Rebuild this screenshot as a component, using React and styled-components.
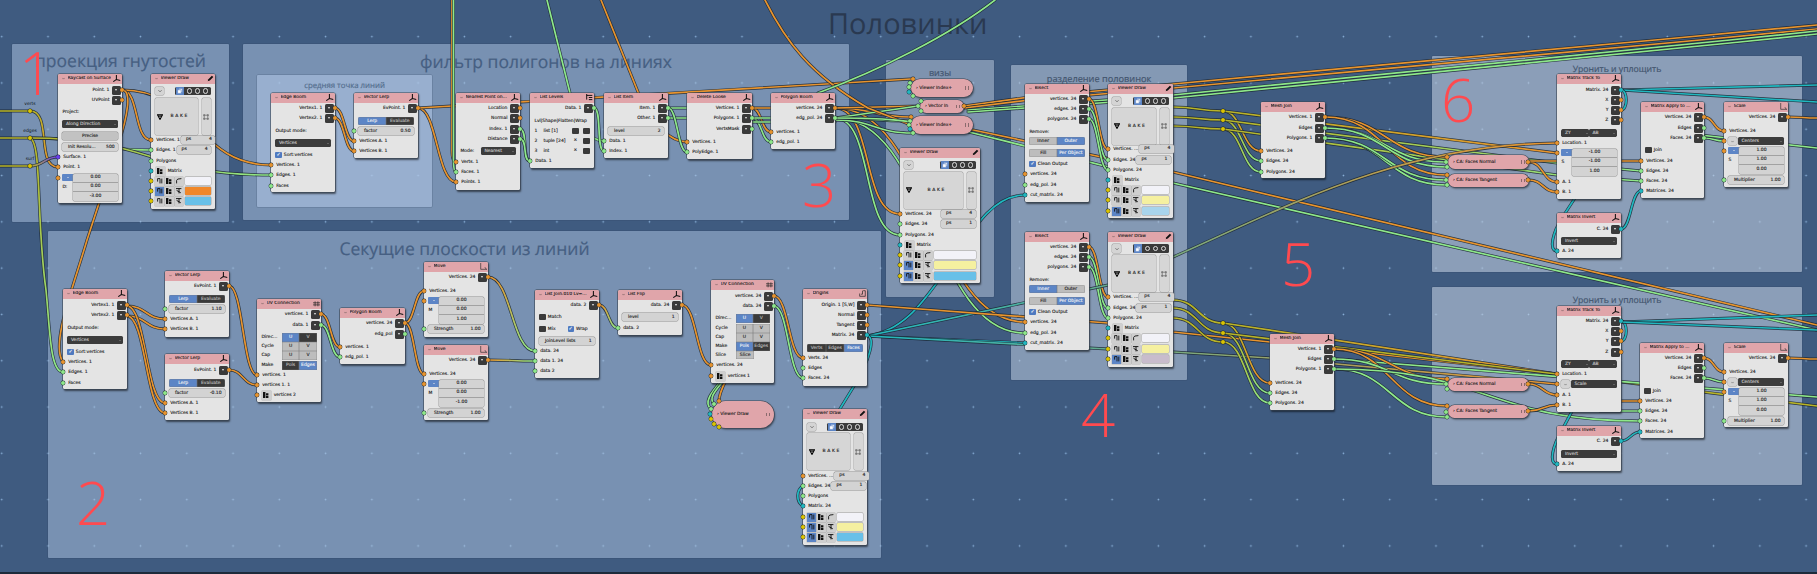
import styled, { createGlobalStyle } from "styled-components";

const O = "#e8942e";
const G = "#8ee88a";
const T = "#20b8c0";
const Y = "#dcc400";
const P = "#6a3ff0";
const OL = "#b8b428";

const GlobalStyle = createGlobalStyle`
  html, body { margin: 0; padding: 0; background: #3f5b80; }
  body { overflow: hidden; }
`;

const Canvas = styled.div`
  position: relative;
  width: 1817px;
  height: 574px;
  overflow: hidden;
  box-sizing: border-box;
  border-bottom: 2px solid #1d2a3a;
  background-color: #3f5b80;
  background-image: radial-gradient(circle, #8db4dc 0.7px, transparent 1.1px);
  background-size: 46.27px 46.3px;
  background-position: -21.4px 13.5px;
  font-family: "DejaVu Sans", sans-serif;
  text-rendering: geometricPrecision;
`;

const PageTitle = styled.div`
  position: absolute;
  left: 828px;
  top: 5px;
  font: 400 29px/1.3 "Open Sans", sans-serif;
  color: #2a3950;
`;

const FrameBox = styled.div`
  position: absolute;
  left: ${(p) => p.$x}px;
  top: ${(p) => p.$y}px;
  width: ${(p) => p.$w}px;
  height: ${(p) => p.$h}px;
  background: ${(p) => p.$bg};
  border-radius: 1px;
  box-shadow: 0 0 0 0.5px rgba(40, 60, 85, 0.35);
  text-align: center;
  color: ${(p) => p.$fg};
  font: 400 ${(p) => p.$fs}px/1.2 "Open Sans", sans-serif;
  padding-top: ${(p) => p.$pt}px;
  box-sizing: border-box;
  -webkit-text-stroke: 0.2px currentColor;
`;

const BigNumber = styled.div`
  position: absolute;
  z-index: 5;
  left: ${(p) => p.$x}px;
  top: ${(p) => p.$y}px;
  font: 300 60px/0.8 "Open Sans", sans-serif;
  color: #ff4a4f;
`;

const WireLayer = styled.svg`
  position: absolute;
  left: 0;
  top: 0;
  z-index: 2;
  fill: none;
  stroke-linecap: round;
`;

const NodeBox = styled.div`
  position: absolute;
  z-index: 3;
  left: ${(p) => p.$x}px;
  top: ${(p) => p.$y}px;
  width: ${(p) => p.$w}px;
  height: ${(p) => p.$h}px;
  background: #e4e4e4;
  border-radius: 1.5px;
  box-shadow: 0 0 0 0.6px #3b4654, 1px 1.5px 2px rgba(0, 0, 0, 0.55);
  font-size: 4.5px;
  color: #1c1c1c;
  -webkit-text-stroke: 0.12px currentColor;
`;

const NodeHeader = styled.div`
  height: 9.5px;
  background: #e0a5aa;
  border-radius: 1.5px 1.5px 0 0;
  display: flex;
  align-items: center;
  padding: 0 1.5px 0 4px;
  gap: 2.5px;
  white-space: nowrap;
  overflow: hidden;
  svg { flex: none; }
`;

const Title = styled.span`
  flex: 1;
  min-width: 0;
  overflow: hidden;
`;

const Row = styled.div`
  position: relative;
  height: ${(p) => p.$h}px;
  display: flex;
  align-items: center;
  padding: 0 4.4px;
  gap: 1px;
  white-space: nowrap;
`;

const OutRow = styled(Row)`
  justify-content: flex-end;
  padding-right: 1.5px;
`;

const InRow = styled(Row)`
  padding-left: 5.2px;
`;

const Socket = styled.i`
  position: absolute;
  z-index: 4;
  width: 4.4px;
  height: 4.4px;
  border-radius: 50%;
  background: ${(p) => p.$c};
  box-shadow: 0 0 0 0.4px #222c36;
  top: 50%;
  margin-top: -2.2px;
  ${(p) => (p.$right ? "right: -2.2px;" : "left: -2.2px;")}
`;

const VecSocket = styled(Socket)`
  top: 4.5px;
`;

const FreeSocket = styled.i`
  position: absolute;
  z-index: 4;
  width: 4.4px;
  height: 4.4px;
  border-radius: 50%;
  background: ${(p) => p.$c};
  box-shadow: 0 0 0 0.4px #222c36;
  left: ${(p) => p.$x - 2.2}px;
  top: ${(p) => p.$y - 2.2}px;
`;

const DropButton = styled.b`
  flex: none;
  width: 8.5px;
  height: 9px;
  margin-left: 1.6px;
  background: #3a3a3a;
  border-radius: 1.5px;
  display: flex;
  align-items: center;
  justify-content: center;
  &::after {
    content: "";
    border-left: 1.6px solid transparent;
    border-right: 1.6px solid transparent;
    border-top: 2px solid #eee;
  }
`;

const Dropdown = styled.div`
  flex: 1;
  min-width: 0;
  height: 8.5px;
  background: #3c3c3c;
  color: #c9c9c9;
  border-radius: 1.5px;
  display: flex;
  align-items: center;
  justify-content: space-between;
  padding: 0 1.5px 0 3.5px;
  overflow: hidden;
  &::after {
    content: "";
    flex: none;
    border-left: 1.2px solid transparent;
    border-right: 1.2px solid transparent;
    border-top: 1.2px solid #888;
  }
`;

const GreyButton = styled.div`
  flex: 1;
  height: 8px;
  background: #c2c2c2;
  border-radius: 1.5px;
  box-shadow: 0 0 0 0.4px #8d8d8d;
  display: flex;
  align-items: center;
  justify-content: center;
`;

const FieldBox = styled(GreyButton)`
  min-width: 0;
  background: #d3d3d3;
  justify-content: space-between;
  padding: 0 3px 0 5.5px;
  overflow: hidden;
`;

const Segments = styled.div`
  flex: 1;
  display: flex;
  height: 8.5px;
  border-radius: 1.5px;
  overflow: hidden;
`;

const Segment = styled.div`
  flex: 1;
  display: flex;
  align-items: center;
  justify-content: center;
  background: ${(p) => (p.$on ? "#5c85c6" : p.$dark ? "#3a3a3a" : "#bdbdbd")};
  color: ${(p) => (p.$on ? "#f2f2f2" : p.$dark ? "#bbb" : "#222")};
  box-shadow: inset 0 0 0 0.3px #777;
`;

const CheckBox = styled.span`
  flex: none;
  width: 6.4px;
  height: 6.4px;
  margin-right: 1px;
  border-radius: 1px;
  background: ${(p) => (p.$on ? "#4f7ac0" : "#3a3a3a")};
  color: #fff;
  font-size: 5px;
  line-height: 6.4px;
  text-align: center;
`;

const VecWrap = styled.div`
  flex: 1;
  display: flex;
  height: 27px;
`;

const VecSide = styled.div`
  flex: none;
  width: 11px;
  display: flex;
  flex-direction: column;
  align-items: flex-start;
  gap: 4px;
`;

const VecToggle = styled.span`
  width: 10.5px;
  height: 7.6px;
  background: #5c85c6;
  border-radius: 1px 0 0 1px;
  display: flex;
  align-items: center;
  justify-content: center;
  &::after {
    content: "";
    border-left: 1.4px solid transparent;
    border-right: 1.4px solid transparent;
    border-bottom: 1.8px solid #eee;
  }
`;

const VecStack = styled.div`
  flex: 1;
  display: flex;
  flex-direction: column;
  background: #d3d3d3;
  border-radius: 1.5px;
  box-shadow: 0 0 0 0.4px #8d8d8d;
`;

const VecCell = styled.div`
  flex: 1;
  display: flex;
  align-items: center;
  justify-content: center;
  & + & { border-top: 0.5px solid #a2a2a2; }
`;

const HeadBox = styled.span`
  flex: none;
  width: 8.5px;
  height: 8.5px;
  border-radius: 1.5px;
  background: #d4d4d4;
  box-shadow: 0 0 0 0.4px #999;
  margin-right: auto;
  display: flex;
  align-items: center;
  justify-content: center;
`;

const ModeGroup = styled.span`
  flex: none;
  height: 8.5px;
  width: 35px;
  background: #3a3a3a;
  border-radius: 1.5px;
  display: flex;
  align-items: center;
  justify-content: space-around;
  padding-right: 1px;
  overflow: hidden;
`;

const ModeActive = styled.span`
  width: 8px;
  height: 8.5px;
  background: #5c85c6;
  display: flex;
  align-items: center;
  justify-content: center;
`;

const ModeRing = styled.span`
  width: 5.2px;
  height: 5.2px;
  border-radius: 50%;
  border: 0.6px solid #ddd;
  box-sizing: border-box;
`;

const BakeBox = styled.div`
  flex: 1;
  height: 37px;
  background: #d6d6d6;
  border-radius: 1.5px;
  box-shadow: 0 0 0 0.4px #999;
  display: flex;
  align-items: center;
  padding: 0 2px;
`;

const BakeLabel = styled.span`
  flex: 1;
  text-align: center;
  letter-spacing: 1.6px;
`;

const BakeSide = styled.div`
  flex: none;
  width: 8.5px;
  height: 37px;
  margin-left: 3px;
  background: #d6d6d6;
  border-radius: 1.5px;
  box-shadow: 0 0 0 0.4px #999;
  display: flex;
  align-items: center;
  justify-content: center;
`;

const PsField = styled(FieldBox)`
  flex: none;
  width: 26px;
  height: 8.4px;
  padding: 0 3.5px 0 5px;
  margin-left: auto;
`;

const Cell = styled.span`
  flex: none;
  width: 8.6px;
  height: 9px;
  background: ${(p) => (p.$on ? "#5c85c6" : "#cfcfcf")};
  box-shadow: 0 0 0 0.3px #999;
  display: flex;
  align-items: center;
  justify-content: center;
`;

const Swatch = styled.span`
  flex: 1;
  height: 8.4px;
  margin-left: 0.6px;
  background: ${(p) => p.$c};
  border-radius: 1px;
  box-shadow: 0 0 0 0.4px #999;
`;

const MatrixIcon = styled(Cell)`
  width: 8.5px;
  margin-right: 2px;
`;

const UvLabel = styled.span`
  flex: none;
  width: 19.5px;
`;

const UvTail = styled.div`
  flex: none;
  width: 18.5px;
  height: 8.6px;
  display: flex;
`;

const UvToggles = styled.div`
  flex: 1;
  height: 9px;
  display: flex;
`;

const LevelNum = styled.span`
  flex: none;
  width: 8px;
`;

const LevelName = styled.span`
  flex: 1;
`;

const LevelMark = styled.span`
  flex: none;
  width: 6.6px;
  height: 6.6px;
  margin-left: 3.4px;
  border-radius: 1px;
  background: ${(p) => (p.$x ? "transparent" : "#3a3a3a")};
  text-align: center;
  line-height: 6.6px;
`;

const PillBox = styled.div`
  position: absolute;
  z-index: 3;
  left: ${(p) => p.$x}px;
  top: ${(p) => p.$y}px;
  width: ${(p) => p.$w}px;
  height: ${(p) => p.$h}px;
  background: #e0a5aa;
  border-radius: ${(p) => p.$h / 2}px;
  box-shadow: 0 0 0 0.6px #3b4654, 1px 1.5px 2px rgba(0, 0, 0, 0.5);
  display: flex;
  align-items: center;
  justify-content: space-between;
  padding: 0 4px 0 5px;
  box-sizing: border-box;
  font-size: 4.5px;
  color: #1c1c1c;
  white-space: nowrap;
  -webkit-text-stroke: 0.12px currentColor;
`;

const PillBars = styled.span`
  flex: none;
  width: 3.6px;
  height: 3.8px;
  border-left: 1.2px solid #8a6a6d;
  border-right: 1.2px solid #8a6a6d;
  box-sizing: border-box;
`;

const RerouteDot = styled.i`
  position: absolute;
  z-index: 4;
  left: ${(p) => p.$x - 2.2}px;
  top: ${(p) => p.$y - 2.2}px;
  width: 4.4px;
  height: 4.4px;
  border-radius: 50%;
  background: ${Y};
  box-shadow: 0 0 0 0.5px #1c2733;
`;

const RerouteLabel = styled.span`
  position: absolute;
  z-index: 4;
  left: ${(p) => p.$x}px;
  top: ${(p) => p.$y - 8}px;
  transform: translateX(-50%);
  font-size: 4.5px;
  line-height: 1;
  color: #0f1620;
`;

function HeaderIcon({ kind }) {
  if (kind === "pencil") {
    return (
      <svg width="7" height="7" viewBox="0 0 10 10">
        <path d="M1 9 L2 6 L7 1 L9 3 L4 8 Z" fill="#111" />
      </svg>
    );
  }
  if (kind === "hash") {
    return (
      <svg width="7" height="7" viewBox="0 0 10 10" stroke="#222" fill="none">
        <path d="M0 4H10M0 7H10M3 2V9M7 2V9" />
      </svg>
    );
  }
  if (kind === "levels") {
    return (
      <svg width="7" height="7" viewBox="0 0 10 10" stroke="#111" fill="none" strokeWidth="1.4">
        <path d="M1 0V8M1 2H9M4 5H9M4 8H9" />
      </svg>
    );
  }
  if (kind === "scale") {
    return (
      <svg width="7" height="7" viewBox="0 0 10 10" stroke="#333" fill="none">
        <path d="M1 0V9H10M7 6L9 9" />
      </svg>
    );
  }
  if (kind === "origin") {
    return (
      <svg width="7" height="7" viewBox="0 0 10 10" stroke="#222" fill="none">
        <path d="M1 5V9H9V1H6M5 1V6H3" />
      </svg>
    );
  }
  return (
    <svg width="7.5" height="7" viewBox="0 0 10 10" stroke="#111" fill="none" strokeWidth="1.5">
      <path d="M4.5 0V6.5L0 9.5M4.5 6.5L10 8" />
    </svg>
  );
}

function Chevron({ size = 3 }) {
  return (
    <svg width={size} height={size} viewBox="0 0 10 10" stroke="#333" fill="none" strokeWidth="1.4">
      <path d="M1 3L5 7L9 3" />
    </svg>
  );
}

function CellGlyph({ n }) {
  if (n === 0) {
    return (
      <svg width="6" height="6" viewBox="0 0 10 10" fill="none" stroke="#111" strokeWidth="1.5">
        <path d="M1 1H5V9M1 1V6M8 1V9" />
      </svg>
    );
  }
  if (n === 1) {
    return (
      <svg width="6" height="6" viewBox="0 0 10 10" fill="#111">
        <path d="M0 0H4V10H0ZM5 2H9V5H5ZM5 6H9V10H5Z" />
      </svg>
    );
  }
  if (n === 2) {
    return (
      <svg width="6" height="6" viewBox="0 0 10 10" fill="none" stroke="#111" strokeWidth="1.5">
        <path d="M1 9V4Q1 1 9 1" />
      </svg>
    );
  }
  return (
    <svg width="6" height="6" viewBox="0 0 10 10" fill="none" stroke="#111" strokeWidth="1.6">
      <path d="M0 1H9M5 1V9M1 4L8 8" />
    </svg>
  );
}

const o = (cy, t, c = O) => ({ k: "o", cy, t, c });
const i = (cy, t, c = O) => ({ k: "i", cy, t, c });
const l = (cy, t) => ({ k: "l", cy, t });
const d = (cy, t) => ({ k: "d", cy, t });
const btn = (cy, t) => ({ k: "b", cy, t });
const f = (cy, t, v, c) => ({ k: "f", cy, t, v, c });
const s = (cy, items, on, all) => ({ k: "s", cy, items, on, all });
const ck = (cy, t, on = true) => ({ k: "c", cy, t, on });
const v = (cy, vals, t, c = O) => ({ k: "v", cy: cy + 9, vals, t, c });
const dd = (cy, a, b) => ({ k: "dd", cy, a, b });
const sd = (cy, t) => ({ k: "sd", cy, t });
const uv = (cy, t, a, b, on, dark) => ({ k: "uv", cy, t, a, b, on, dark });
const lv = (cy, n, t, x) => ({ k: "lv", cy, n, t, x });
const vh = (cy) => ({ k: "vh", cy });
const vb = (cy) => ({ k: "vb", cy });
const vi = (cy, t, c, ps) => ({ k: "vi", cy, t, c, ps });
const mat = (cy, t) => ({ k: "mat", cy, t });
const vc = (cy, on, color, last) => ({ k: "vc", cy, on, color, last });

const WHITE = "#f2f2f8";
const PALE = "#f5f0a0";
const SKY = "#68c0e8";

const rowHeights = { o: 9, i: 9, l: 9, d: 8.5, b: 8.5, f: 8, s: 8.5, c: 9, v: 27, dd: 8.5, sd: 8.5, uv: 9, lv: 9, vh: 9, vb: 37, vi: 9, mat: 9, vc: 9 };

const bisect = (y, on, on2) => [
  o(y + 15, "vertices. 24"),
  o(y + 25, "edges. 24", G),
  o(y + 35, "polygons. 24", G),
  l(y + 48, "Remove:"),
  s(y + 57, ["Inner", "Outer"], on),
  s(y + 69, ["Fill", "Per Object"], on2),
  ck(y + 80, "Clean Output"),
  i(y + 90, "vertices. 24"),
  i(y + 101, "edg_pol. 24", G),
  i(y + 111, "cut_matrix. 24", T),
];

const lerp = (y, val) => [
  o(y + 15, "EvPoint. 1"),
  s(y + 28, ["Lerp", "Evaluate"], 0, true),
  f(y + 38, "factor", val, G),
  i(y + 48, "Vertices A. 1"),
  i(y + 58, "Vertices B. 1"),
];

const edgeBoom = (y) => [
  o(y + 15, "Vertex1. 1"),
  o(y + 25, "Vertex2. 1"),
  l(y + 38, "Output mode:"),
  d(y + 50, "Vertices"),
  ck(y + 62, "Sort:vertices"),
  i(y + 72, "Vertices. 1"),
  i(y + 82, "Edges. 1", G),
  i(y + 93, "Faces", G),
];

const nodes = [
  { t: "Raycast on Surface", x: 58, y: 74, w: 64, b: 203, rows: [o(90, "Point. 1"), o(100, "UVPoint"), l(112, "Project:"), d(124, "Along Direction"), btn(136, "Precise"), f(147, "Init Resolu...", "500"), i(157, "Surface. 1", P), i(167, "Point. 1"), v(178, ["0.00", "0.00", "-3.00"], "D:")] },
  { t: "Viewer Draw", x: 151, y: 74, w: 64, b: 209, ic: "pencil", rows: [vh(91), vb(116.5), vi(140, "Vertices. 1", O, "4"), vi(150, "Edges. 1", G, "4"), i(161, "Polygons", G), mat(171, "Matrix"), vc(181, -1, WHITE), vc(191, 0, "#f0872a", 1), vc(201, -1, SKY, 1)] },
  { t: "Edge Boom", x: 271, y: 93, w: 64, b: 192, rows: edgeBoom(93) },
  { t: "Vector Lerp", x: 354, y: 93, w: 64, b: 158, rows: lerp(93, "0.50") },
  { t: "Nearest Point on...", x: 456, y: 93, w: 64, b: 190, rows: [o(108, "Location"), o(118, "Normal"), o(129, "Index. 1", G), o(139, "Distance", G), { k: "mode", cy: 151 }, i(162, "Verts. 1"), i(172, "Faces. 1", G), i(182, "Points. 1")] },
  { t: "List Levels", x: 530, y: 93, w: 64, b: 168, ic: "levels", rows: [o(108, "Data. 1", G), l(121, "Lvl|Shape|Flatten|Wrap"), lv(131, "1", "list [1]", false), lv(141, "2", "tuple [24]", true), lv(151, "3", "int", true), i(161, "Data. 1", G)] },
  { t: "List Item", x: 604, y: 93, w: 64, b: 158, rows: [o(108, "Item. 1", G), o(118, "Other. 1", G), f(131, "level", "2"), i(141, "Data. 1", G), i(151, "Index. 1", G)] },
  { t: "Delete Loose", x: 687, y: 93, w: 65, b: 159, rows: [o(108, "Vertices. 1"), o(118, "Polygons. 1", G), o(129, "VertsMask", G), i(142, "Vertices. 1"), i(152, "PolyEdge. 1", G)] },
  { t: "Polygon Boom", x: 771, y: 93, w: 64, b: 149, rows: [o(108, "vertices. 24"), o(118, "edg_pol. 24", G), i(132, "vertices. 1"), i(142, "edg_pol. 1", G)] },
  { t: "Viewer Draw", x: 900, y: 148, w: 80, b: 283, ic: "pencil", rows: [vh(165), vb(190), vi(214, "Vertices. 24", O, "4"), vi(224, "Edges. 24", G, "1"), i(235, "Polygons. 24", G), mat(245, "Matrix"), vc(255, -1, WHITE), vc(265, 0, PALE, 1), vc(276, 0, SKY, 1)] },
  { t: "Bisect", x: 1025, y: 84, w: 64, b: 202, rows: bisect(84, 1, 1) },
  { t: "Viewer Draw", x: 1108, y: 84, w: 65, b: 218, ic: "pencil", rows: [vh(101), vb(126), vi(149, "Vertices. ...", O, "4"), vi(160, "Edges. 24", G, "1"), i(170, "Polygons. 24", G), mat(180, "Matrix"), vc(190, -1, WHITE), vc(200, -1, PALE, 1), vc(211, 0, "#a8d4ec", 1)] },
  { t: "Bisect", x: 1025, y: 232, w: 64, b: 350, rows: bisect(232, 0, 1) },
  { t: "Viewer Draw", x: 1108, y: 232, w: 65, b: 367, ic: "pencil", rows: [vh(248.5), vb(273.5), vi(297, "Vertices. ...", O, "4"), vi(308, "Edges. 24", G, "1"), i(318, "Polygons. 24", G), mat(328, "Matrix"), vc(338, -1, WHITE), vc(349, -1, PALE, 1), vc(359, 0, "#c8bccc", 1)] },
  { t: "Mesh Join", x: 1261, y: 102, w: 64, b: 178, rows: [o(117, "Vertices. 1"), o(128, "Edges", G), o(138, "Polygons. 1", G), i(151, "Vertices. 24"), i(161, "Edges. 24", G), i(172, "Polygons. 24", G)] },
  { t: "Mesh Join", x: 1270, y: 334, w: 64, b: 410, rows: [o(349, "Vertices. 1"), o(359, "Edges", G), o(369, "Polygons. 1", G), i(383, "Vertices. 24"), i(393, "Edges. 24", G), i(403, "Polygons. 24", G)] },
  { t: "Matrix Track To", x: 1557, y: 74, w: 64, b: 199, rows: [o(90, "Matrix. 24", T), o(100, "X"), o(110, "Y"), o(120, "Z"), dd(133, "ZY", "AB"), i(143, "Location. 1"), v(153, ["-1.00", "-1.00", "1.00"], "S"), i(182, "A. 1"), i(192, "B. 1")] },
  { t: "Matrix Invert", x: 1557, y: 213, w: 64, b: 258, rows: [o(229, "C. 24", T), d(241, "Invert"), i(251, "A. 24", T)] },
  { t: "Matrix Apply to ...", x: 1641, y: 102, w: 63, b: 198, rows: [o(117, "Vertices. 24"), o(128, "Edges", G), o(138, "Faces. 24", G), ck(150, "Join", false), i(161, "Vertices. 24"), i(171, "Edges. 24", G), i(181, "Faces. 24", G), i(191, "Matrices. 24", T)] },
  { t: "Scale", x: 1724, y: 102, w: 64, b: 187, ic: "scale", rows: [o(117, "Vertices. 24"), i(131, "Vertices. 24"), sd(141, "Centers"), v(151, ["1.00", "1.00", "0.00"], "S"), f(180, "Multiplier", "1.00", G)] },
  { t: "Matrix Track To", x: 1557, y: 306, w: 64, b: 412, rows: [o(321, "Matrix. 24", T), o(331, "X"), o(341, "Y"), o(352, "Z"), dd(364, "ZY", "AB"), i(374, "Location. 1"), sd(384, "Scale"), i(395, "A. 1"), i(405, "B. 1")] },
  { t: "Matrix Invert", x: 1557, y: 426, w: 64, b: 471, rows: [o(441, "C. 24", T), d(454, "Invert"), i(464, "A. 24", T)] },
  { t: "Matrix Apply to ...", x: 1640, y: 343, w: 64, b: 438, rows: [o(358, "Vertices. 24"), o(368, "Edges", G), o(378, "Faces. 24", G), ck(391, "Join", false), i(401, "Vertices. 24"), i(411, "Edges. 24", G), i(421, "Faces. 24", G), i(432, "Matrices. 24", T)] },
  { t: "Scale", x: 1724, y: 343, w: 64, b: 427, ic: "scale", rows: [o(358, "Vertices. 24"), i(372, "Vertices. 24"), sd(382, "Centers"), v(392, ["1.00", "1.00", "0.00"], "S"), f(421, "Multiplier", "1.00", G)] },
  { t: "Edge Boom", x: 63, y: 289, w: 64, b: 389, rows: edgeBoom(290) },
  { t: "Vector Lerp", x: 165, y: 271, w: 64, b: 337, rows: lerp(271, "1.10") },
  { t: "Vector Lerp", x: 165, y: 354, w: 64, b: 420, rows: lerp(355, "-0.10") },
  { t: "UV Connection", x: 257, y: 299, w: 64, b: 402, ic: "hash", rows: [o(314, "vertices. 1"), o(325, "data. 1", G), uv(337, "Direc...", "U", "V", [0], [1]), uv(346, "Cycle", "U", "V", [], []), uv(355, "Cap", "U", "V", [], []), uv(365, "Make", "Pols", "Edges", [1], [0]), i(375, "vertices. 1"), i(385, "vertices 1. 1"), { k: "ico", cy: 395, t: "vertices 2" }] },
  { t: "Polygon Boom", x: 340, y: 308, w: 65, b: 364, rows: [o(323, "vertices. 24"), o(334, "edg_pol", G), i(347, "vertices. 1"), i(357, "edg_pol. 1", G)] },
  { t: "Move", x: 424, y: 262, w: 64, b: 337, ic: "scale", rows: [o(277, "Vertices. 24"), i(291, "Vertices. 24"), v(301, ["0.00", "0.00", "1.00"], "M"), f(329, "Strength", "1.00", G)] },
  { t: "Move", x: 424, y: 345, w: 64, b: 420, ic: "scale", rows: [o(360, "Vertices. 24"), i(374, "Vertices. 24"), v(384, ["0.00", "0.00", "-1.00"], "M"), f(413, "Strength", "1.00", G)] },
  { t: "List Join.010 Lv=...", x: 535, y: 290, w: 64, b: 378, rows: [o(305, "data. 2"), ck(317, "Match", false), { k: "mw", cy: 329 }, f(341, "JoinLevel lists", "1"), i(351, "data. 24", G), i(361, "data 1. 24", G), i(371, "data 2", G)] },
  { t: "List Flip", x: 618, y: 290, w: 64, b: 335, rows: [o(305, "data. 24"), f(317, "level", "1"), i(328, "data. 2", G)] },
  { t: "UV Connection", x: 711, y: 280, w: 63, b: 383, ic: "hash", rows: [o(296, "vertices. 24"), o(306, "data. 24", G), uv(318, "Direc...", "U", "V", [0], [1]), uv(328, "Cycle", "U", "V", [], []), uv(337, "Cap", "U", "V", [], []), uv(346, "Make", "Pols", "Edges", [0], [1]), { k: "slice", cy: 355 }, i(365, "vertices. 24"), { k: "ico", cy: 376, t: "vertices 1" }] },
  { t: "Origins", x: 803, y: 289, w: 64, b: 386, ic: "origin", rows: [o(305, "Origin. 1 [S,W]"), o(315, "Normal"), o(325, "Tangent"), o(335, "Matrix. 24", T), s(348, ["Verts", "Edges", "Faces"], 2, true), i(358, "Verts. 24"), i(368, "Edges", G), i(378, "Faces. 24", G)] },
  { t: "Viewer Draw", x: 803, y: 409, w: 64, b: 545, ic: "pencil", rows: [vh(427), vb(451.5), vi(476, "Vertices. ...", O, "4"), vi(486, "Edges. 24", G, "1"), i(496, "Polygons", G), i(506, "Matrix. 24", T), vc(517, 0, WHITE), vc(527, 0, PALE, 1), vc(537, 0, SKY, 1)] },
];

const pills = [
  { t: "Viewer Index+", x: 911, y: 79, w: 62, h: 18, sockets: [[913, 79, O], [910, 83, G], [909, 87, G], [909, 92, T], [913, 96, G]] },
  { t: "Vector In", x: 920, y: 100, w: 44, h: 13, sockets: [[921, 101, G], [918, 106, G], [921, 111, G], [964, 106, O]] },
  { t: "Viewer Index+", x: 911, y: 116, w: 62, h: 18, sockets: [[911, 117, O], [910, 121, G], [909, 125, G], [910, 129, T], [913, 133, G]] },
  { t: "Viewer Draw", x: 712, y: 401, w: 62, h: 27, sockets: [[719, 401, O], [714, 404, G], [711, 409, G], [710, 414, T], [711, 419, Y], [714, 424, Y], [719, 427, Y]] },
  { t: "CA: Faces Normal", x: 1448, y: 155, w: 81, h: 14, sockets: [[1447, 157, O], [1446, 162, G], [1447, 167, G], [1528, 162, O]] },
  { t: "CA: Faces Tangent", x: 1448, y: 174, w: 81, h: 13, sockets: [[1447, 175, O], [1446, 180, G], [1447, 185, G], [1528, 180, O]] },
  { t: "CA: Faces Normal", x: 1448, y: 378, w: 81, h: 13, sockets: [[1447, 379, O], [1446, 384, G], [1447, 389, G], [1528, 384, O]] },
  { t: "CA: Faces Tangent", x: 1448, y: 405, w: 81, h: 13, sockets: [[1447, 406, O], [1446, 412, G], [1447, 417, G], [1528, 411, O]] },
];

const frames = [
  { x: 12, y: 44, w: 217, h: 178, bg: "rgba(172,196,224,0.52)", fg: "#465f82", fs: 17.5, pt: 7, label: "проекция гнутостей" },
  { x: 243, y: 44, w: 606, h: 176, bg: "rgba(172,196,224,0.52)", fg: "#465f82", fs: 17.5, pt: 8, label: "фильтр полигонов на линиях" },
  { x: 257, y: 75, w: 175, h: 132, bg: "rgba(178,200,232,0.55)", fg: "#56708f", fs: 7.8, pt: 7.3, label: "средняя точка линий" },
  { x: 48, y: 231, w: 833, h: 327, bg: "rgba(172,196,224,0.52)", fg: "#465f82", fs: 17.5, pt: 8, label: "Секущие плоскости из линий" },
  { x: 886, y: 60, w: 108, h: 237, bg: "rgba(190,204,222,0.5)", fg: "#44566f", fs: 9, pt: 7.6, label: "визы" },
  { x: 1011, y: 65, w: 176, h: 315, bg: "rgba(190,204,222,0.55)", fg: "#44566f", fs: 9.2, pt: 7.5, label: "разделение половинок" },
  { x: 1432, y: 56, w: 370, h: 216, bg: "rgba(190,204,222,0.6)", fg: "#44566f", fs: 8.7, pt: 7.8, label: "Уронить и уплощить" },
  { x: 1432, y: 287, w: 370, h: 198, bg: "rgba(190,204,222,0.6)", fg: "#44566f", fs: 8.7, pt: 8, label: "Уронить и уплощить" },
];

const numbers = [
  { n: "1", x: 19, y: 48 },
  { n: "2", x: 76, y: 478 },
  { n: "3", x: 802, y: 160 },
  { n: "4", x: 1081, y: 390 },
  { n: "5", x: 1281, y: 239 },
  { n: "6", x: 1441, y: 75 },
];

const reroutes = [
  { x: 30, y: 111, label: "verts" },
  { x: 30, y: 138, label: "edges" },
  { x: 30, y: 166, label: "surf" },
  { x: 1223, y: 111 },
  { x: 1223, y: 120 },
  { x: 1223, y: 129 },
  { x: 1223, y: 323 },
  { x: 1223, y: 333 },
  { x: 1223, y: 342 },
];

// a: start colour, b: end colour, k: handle length (0 draws a straight wire)
const w = (x1, y1, x2, y2, a, b = a, k = 0.5) => {
  const h = k === 0 ? 0 : Math.max(Math.abs(x2 - x1) * k, 8);
  return { d: `M${x1} ${y1} C${x1 + h} ${y1} ${x2 - h} ${y2} ${x2} ${y2}`, a, b, x1, y1, x2, y2 };
};
const r = (d, a, b = a, x1 = 0, y1 = 0, x2 = 1817, y2 = 0) => ({ d, a, b, x1, y1, x2, y2 });

const wires = [
  w(-5, 111, 30, 111, OL), w(-5, 138, 30, 138, OL), w(-5, 166, 30, 166, OL),
  w(30, 111, 58, 167, OL, O, 0.8),
  w(30, 138, 151, 150, OL, G),
  w(30, 138, 271, 175, OL, G),
  r("M30 138 C42 142 36 220 46 290 C50 330 50 372 63 372", OL, G, 30, 138, 63, 372),
  w(30, 166, 58, 157, OL, P),
  w(122, 90, 151, 140, O, O, 0.6),
  w(122, 90, 271, 165, O),
  r("M122 90 C132 90 128 115 118 145 L87 240 C74 285 50 345 63 362", O),
  w(335, 108, 354, 141, O), w(335, 118, 354, 151, O),
  w(418, 108, 456, 182, O),
  w(418, 108, 911, 79, O, O, 0),
  r("M452 -5 L452 150 Q452 162 456 162", O),
  r("M453.5 -5 L453.5 160 Q453.5 172 456 172", G),
  w(520, 129, 530, 161, G), w(520, 139, 530, 161, G),
  r("M547 0 L570 93 C578 125 590 141 604 141", G),
  w(594, 108, 604, 151, G),
  r("M601 0 L638 92 C650 125 672 142 687 142", O),
  w(668, 108, 687, 108, G), w(668, 118, 687, 118, G), w(668, 108, 687, 152, G),
  w(752, 108, 771, 132, O), w(752, 118, 771, 142, G),
  w(752, 108, 835, 108, O, O, 0), w(752, 118, 835, 118, G, G, 0), w(752, 122, 835, 122, G, G, 0),
  w(835, 108, 900, 214, O, O, 0.6), w(835, 118, 900, 235, G, G, 0.6),
  w(835, 108, 1025, 322, O), w(835, 118, 1025, 333, G),
  w(835, 108, 911, 117, O), w(835, 118, 910, 121, G), w(835, 120, 913, 133, G),
  w(835, 108, 920, 106, O, O, 0), w(835, 118, 918, 106, G, G, 0),
  r("M765 0 C785 40 810 75 868 108 L911 125 L973 130 L1173 172 L1817 325", O),
  r("M995 0 C950 35 880 70 818 93", G),
  r("M835 118 C880 118 900 118 973 133 L1173 183 L1817 330", G),
  r("M964 106 L1030 97 L1173 84 L1655 40 L1817 25", O),
  r("M964 108 L1030 100 L1173 88 L1700 40 L1817 29", O),
  r("M968 110 L1025 106 L1173 95 L1730 40 L1817 31", G),
  r("M968 112 L1025 108 L1173 98 L1740 42 L1817 34", G),
  w(1089, 99, 1108, 149, O), w(1089, 109, 1108, 160, G), w(1089, 119, 1108, 170, G),
  w(1089, 247, 1108, 297, O), w(1089, 257, 1108, 308, G), w(1089, 267, 1108, 318, G),
  w(1173, 107, 1223, 111, OL), w(1173, 117, 1223, 120, OL), w(1173, 126, 1223, 129, OL),
  w(1223, 111, 1261, 151, OL, O), w(1223, 120, 1261, 161, OL, G), w(1223, 129, 1261, 172, OL, G),
  r("M1223 111 L1557 153", OL, O, 1223, 111, 1557, 153),
  r("M1223 120 L1557 163 L1641 171", OL, G, 1223, 120, 1641, 171),
  r("M1223 129 L1557 175 L1641 181", OL, G, 1223, 129, 1641, 181),
  w(1325, 117, 1447, 157, O), w(1325, 117, 1447, 175, O),
  w(1325, 128, 1446, 162, G), w(1325, 138, 1447, 185, G), w(1325, 128, 1447, 167, G), w(1325, 138, 1446, 180, G),
  w(1529, 162, 1557, 182, O), w(1529, 180, 1557, 192, O),
  w(1529, 161, 1641, 161, O),
  r("M867 336 C910 330 930 290 950 265 C970 235 990 195 1025 195", T),
  r("M867 336 L1108 285 L1173 257 C1290 205 1400 145 1557 143", T, O, 867, 336, 1557, 143),
  w(867, 336, 1025, 343, T, T, 0),
  r("M867 305 L1108 323 L1173 332 L1270 342 L1557 374", O),
  r("M867 336 L1108 349 L1173 352 L1270 358 L1557 384", T, O, 867, 336, 1557, 384),
  r("M867 336 C876 336 870 360 854 386 L838 412", T),
  r("M803 486 C796 490 796 502 803 506", T),
  w(1621, 90, 1817, 85, T, T, 0), w(1621, 90, 1817, 102, T, T, 0),
  r("M1621 90 C1628 90 1628 110 1621 110", T),
  w(1621, 229, 1641, 191, T),
  r("M1557 251 C1548 251 1553 232 1562 218 L1575 198", T),
  w(1704, 117, 1724, 131, O), w(1704, 138, 1724, 141, G),
  w(1788, 117, 1817, 118, O), w(1700, 135, 1817, 148, G, G, 0),
  w(1173, 300, 1223, 323, OL), w(1173, 308, 1223, 333, OL), w(1173, 318, 1223, 342, OL),
  w(1223, 323, 1270, 383, OL, O), w(1223, 333, 1270, 393, OL, G), w(1223, 342, 1270, 403, OL, G),
  r("M1223 323 L1557 374", OL, O, 1223, 323, 1557, 374),
  w(1223, 333, 1817, 406, OL, OL, 0),
  w(1334, 359, 1817, 397, G, G, 0),
  w(1334, 349, 1447, 379, O), w(1334, 349, 1447, 406, O),
  w(1334, 359, 1446, 384, G), w(1334, 369, 1447, 417, G), w(1334, 369, 1640, 421, G),
  w(1529, 384, 1557, 395, O), w(1529, 411, 1557, 405, O),
  w(1600, 401, 1640, 401, O, O, 0),
  w(1600, 411, 1640, 411, G, G, 0),
  r("M1621 321 C1628 321 1628 341 1621 341", T),
  w(1621, 322, 1817, 315, T, T, 0), w(1621, 322, 1817, 330, T, T, 0),
  w(1621, 441, 1640, 432, T),
  r("M1557 464 C1548 464 1553 445 1562 430 L1578 400", T),
  w(1704, 358, 1724, 372, O), w(1704, 378, 1724, 382, G),
  w(1788, 358, 1817, 359, O),
  w(127, 306, 165, 319, O), w(127, 316, 165, 329, O),
  w(127, 306, 165, 403, O), w(127, 316, 165, 413, O),
  w(229, 286, 257, 375, O), w(229, 370, 257, 385, O),
  w(321, 314, 340, 347, O), w(321, 325, 340, 357, G),
  w(405, 323, 424, 291, O), w(405, 323, 424, 374, O),
  w(488, 277, 535, 351, O, G), w(488, 360, 535, 361, O, G),
  w(599, 305, 618, 328, O, G),
  w(682, 305, 711, 365, O),
  w(774, 296, 803, 358, O), w(774, 306, 803, 378, G),
  r("M726 380 C720 392 719 396 719 401", O),
  r("M722 380 C712 392 703 402 711 409", G),
  r("M724 380 C716 390 708 398 714 404", G),
];

function Wires() {
  return (
    <WireLayer width="1817" height="574" viewBox="0 0 1817 574">
      <defs>
        {wires.map((wire, n) =>
          wire.a !== wire.b ? (
            <linearGradient key={n} id={`wire${n}`} gradientUnits="userSpaceOnUse" x1={wire.x1} y1={wire.y1} x2={wire.x2} y2={wire.y2}>
              <stop offset="0" stopColor={wire.a} />
              <stop offset="1" stopColor={wire.b} />
            </linearGradient>
          ) : null
        )}
      </defs>
      {wires.map((wire, n) => (
        <g key={n}>
          <path d={wire.d} stroke="#1c2733" strokeWidth="3" strokeOpacity="0.9" />
          <path d={wire.d} stroke={wire.a !== wire.b ? `url(#wire${n})` : wire.a} strokeWidth="1.7" />
        </g>
      ))}
    </WireLayer>
  );
}

function NodeRow({ row, h, top }) {
  const gap = { marginTop: top };
  switch (row.k) {
    case "o":
      return (
        <OutRow $h={h} style={gap}>
          {row.t}
          <DropButton />
          <Socket $c={row.c} $right />
        </OutRow>
      );
    case "i":
      return (
        <InRow $h={h} style={gap}>
          <Socket $c={row.c} />
          {row.t}
        </InRow>
      );
    case "l":
      return <Row $h={h} style={gap}>{row.t}</Row>;
    case "d":
      return (
        <Row $h={h} style={gap}>
          <Dropdown>{row.t}</Dropdown>
        </Row>
      );
    case "b":
      return (
        <Row $h={h} style={gap}>
          <GreyButton>{row.t}</GreyButton>
        </Row>
      );
    case "f":
      return (
        <Row $h={h} style={gap}>
          {row.c && <Socket $c={row.c} />}
          <FieldBox>
            <span>{row.t}</span>
            <span>{row.v}</span>
          </FieldBox>
        </Row>
      );
    case "s":
      return (
        <Row $h={h} style={gap}>
          <Segments>
            {row.items.map((item, n) => (
              <Segment key={item} $on={n === row.on} $dark={row.all}>
                {item}
              </Segment>
            ))}
          </Segments>
        </Row>
      );
    case "c":
      return (
        <Row $h={h} style={gap}>
          <CheckBox $on={row.on}>{row.on ? "✓" : ""}</CheckBox>
          {row.t}
        </Row>
      );
    case "v":
      return (
        <Row $h={h} style={gap}>
          <VecSocket $c={row.c} />
          <VecWrap>
            <VecSide>
              <VecToggle />
              {row.t}
            </VecSide>
            <VecStack>
              {row.vals.map((val, n) => (
                <VecCell key={n}>{val}</VecCell>
              ))}
            </VecStack>
          </VecWrap>
        </Row>
      );
    case "dd":
      return (
        <Row $h={h} style={gap}>
          <Segments>
            <Dropdown>{row.a}</Dropdown>
            <Dropdown>{row.b}</Dropdown>
          </Segments>
        </Row>
      );
    case "sd":
      return (
        <Row $h={h} style={gap}>
          <Socket $c={O} />
          <HeadBox>
            <Chevron />
          </HeadBox>
          <Dropdown>{row.t}</Dropdown>
        </Row>
      );
    case "mode":
      return (
        <Row $h={h} style={gap}>
          <UvLabel>Mode:</UvLabel>
          <Dropdown>Nearest</Dropdown>
        </Row>
      );
    case "uv":
      return (
        <Row $h={h} style={gap}>
          <UvLabel>{row.t}</UvLabel>
          <UvToggles>
            <Segment $on={row.on.includes(0)} $dark={row.dark.includes(0)}>{row.a}</Segment>
            <Segment $on={row.on.includes(1)} $dark={row.dark.includes(1)}>{row.b}</Segment>
          </UvToggles>
        </Row>
      );
    case "slice":
      return (
        <Row $h={h} style={gap}>
          <UvLabel>Slice</UvLabel>
          <UvTail>
            <Segment>Slice</Segment>
          </UvTail>
        </Row>
      );
    case "lv":
      return (
        <Row $h={h} style={gap}>
          <LevelNum>{row.n}</LevelNum>
          <LevelName>{row.t}</LevelName>
          <LevelMark $x={row.x}>{row.x ? "×" : ""}</LevelMark>
          <LevelMark />
        </Row>
      );
    case "mw":
      return (
        <Row $h={h} style={gap}>
          <CheckBox />
          <LevelName>Mix</LevelName>
          <CheckBox $on>✓</CheckBox>
          <LevelName>Wrap</LevelName>
        </Row>
      );
    case "vh":
      return (
        <Row $h={h} style={gap}>
          <HeadBox>
            <Chevron size={4} />
          </HeadBox>
          <ModeGroup>
            <ModeActive>
              <svg width="6" height="6" viewBox="0 0 10 10" fill="#fff" stroke="#5c85c6">
                <path d="M1 3H7V9H1ZM3 1H9V7H7" />
              </svg>
            </ModeActive>
            <ModeRing />
            <ModeRing />
            <ModeRing />
          </ModeGroup>
        </Row>
      );
    case "vb":
      return (
        <Row $h={h} style={gap}>
          <BakeBox>
            <svg width="6" height="6" viewBox="0 0 10 10" fill="none" stroke="#000" strokeWidth="1.8">
              <path d="M1 1.5H9L5 9ZM4 4H6" />
            </svg>
            <BakeLabel>BAKE</BakeLabel>
          </BakeBox>
          <BakeSide>
            <svg width="6" height="6" viewBox="0 0 10 10" fill="none" stroke="#444">
              <path d="M2 2H8V8H2ZM0 2H2V0M8 0V2H10M0 8H2V10M8 10V8H10" />
            </svg>
          </BakeSide>
        </Row>
      );
    case "vi":
      return (
        <InRow $h={h} style={gap}>
          <Socket $c={row.c} />
          {row.t}
          <PsField>
            <span>ps</span>
            <span>{row.ps}</span>
          </PsField>
        </InRow>
      );
    case "mat":
    case "ico":
      return (
        <InRow $h={h} style={gap}>
          <Socket $c={row.k === "mat" ? T : O} />
          <MatrixIcon>
            <CellGlyph n={1} />
          </MatrixIcon>
          {row.t}
        </InRow>
      );
    case "vc":
      return (
        <Row $h={h} style={gap}>
          <Socket $c={Y} />
          <Cell $on={row.on === 0}><CellGlyph n={0} /></Cell>
          <Cell><CellGlyph n={1} /></Cell>
          <Cell><CellGlyph n={row.last ? 3 : 2} /></Cell>
          <Swatch $c={row.color} />
        </Row>
      );
    default:
      return null;
  }
}

function Node({ node }) {
  let pos = node.y + 9.5;
  return (
    <NodeBox $x={node.x} $y={node.y} $w={node.w} $h={node.b - node.y}>
      <NodeHeader>
        <Chevron />
        <Title>{node.t}</Title>
        <HeaderIcon kind={node.ic} />
      </NodeHeader>
      {node.rows.map((row, n) => {
        const h = rowHeights[row.k] ?? 9;
        const top = row.cy - h / 2 - pos;
        pos = row.cy + h / 2;
        return <NodeRow key={n} row={row} h={h} top={top} />;
      })}
    </NodeBox>
  );
}

function Pill({ pill }) {
  return (
    <>
      <PillBox $x={pill.x} $y={pill.y} $w={pill.w} $h={pill.h}>
        <span>› {pill.t}</span>
        <PillBars />
      </PillBox>
      {pill.sockets.map(([x, y, c], n) => (
        <FreeSocket key={n} $x={x} $y={y} $c={c} />
      ))}
    </>
  );
}

export default function App() {
  return (
    <Canvas>
      <GlobalStyle />
      <PageTitle>Половинки</PageTitle>
      {frames.map((fr) => (
        <FrameBox key={fr.x + "-" + fr.y} $x={fr.x} $y={fr.y} $w={fr.w} $h={fr.h} $bg={fr.bg} $fg={fr.fg} $fs={fr.fs} $pt={fr.pt}>
          {fr.label}
        </FrameBox>
      ))}
      <Wires />
      {reroutes.map((rt) => (
        <div key={rt.x + "-" + rt.y}>
          <RerouteDot $x={rt.x} $y={rt.y} />
          {rt.label && <RerouteLabel $x={rt.x} $y={rt.y}>{rt.label}</RerouteLabel>}
        </div>
      ))}
      {nodes.map((node) => (
        <Node key={node.x + "-" + node.y} node={node} />
      ))}
      {pills.map((pill) => (
        <Pill key={pill.x + "-" + pill.y} pill={pill} />
      ))}
      {numbers.map((num) => (
        <BigNumber key={num.n} $x={num.x} $y={num.y}>{num.n}</BigNumber>
      ))}
    </Canvas>
  );
}
